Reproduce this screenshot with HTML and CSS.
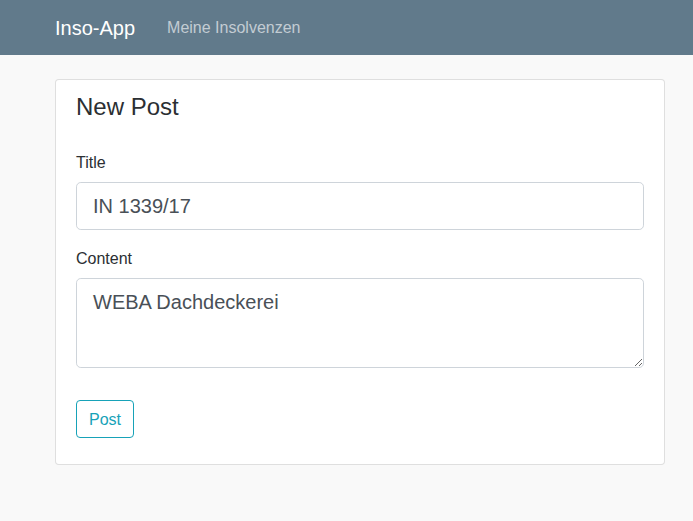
FILE: index.html
```html
<!DOCTYPE html>
<html lang="de">
<head>
<meta charset="utf-8">
<title>Inso-App</title>
<link rel="stylesheet" href="styles.css">
</head>
<body>
<nav class="navbar">
  <a class="brand" href="#">Inso-App</a>
  <a class="nav-link" href="#">Meine Insolvenzen</a>
</nav>
<main class="main">
  <div class="card">
    <h4 class="card-title">New Post</h4>
    <form class="form">
      <div class="form-group">
        <label class="label" for="title">Title</label>
        <input class="control" id="title" type="text" value="IN 1339/17">
      </div>
      <div class="form-group">
        <label class="label" for="content">Content</label>
        <textarea class="control area" id="content">WEBA Dachdeckerei</textarea>
      </div>
      <button class="btn" type="button">Post</button>
    </form>
  </div>
</main>
</body>
</html>
```
FILE: styles.css
```css
html, body {
  margin: 0;
  padding: 0;
}
body {
  background: #f9f9f9;
  font-family: "Liberation Sans", Arial, sans-serif;
  color: #212529;
  font-size: 16px;
  line-height: 1.5;
}
.navbar {
  height: 55px;
  background: #617a8b;
  display: flex;
  align-items: center;
  padding: 0 55px;
  box-sizing: border-box;
}
.brand {
  color: #fff;
  font-size: 20px;
  text-decoration: none;
  line-height: 30px;
  margin-right: 32px;
}
.nav-link {
  color: #c3ccd3;
  text-decoration: none;
  font-size: 16px;
}
.main {
  padding: 24px 28px 0 55px;
}
.card {
  width: 610px;
  box-sizing: border-box;
  background: #fff;
  border: 1px solid rgba(0,0,0,.125);
  border-radius: 4px;
  padding: 12px 20px 26px;
}
.card-title {
  margin: 0 0 29px;
  font-size: 24px;
  font-weight: 400;
  line-height: 29px;
  color: #2b2f33;
}
.form {
  margin: 0;
}
.form-group {
  margin-bottom: 16px;
}
.label {
  display: block;
  padding-top: 1px;
  margin-bottom: 7px;
  line-height: 24px;
  color: #2b2f33;
}
.control {
  display: block;
  width: 100%;
  box-sizing: border-box;
  height: 48px;
  padding: 8px 16px;
  font-family: "Liberation Sans", Arial, sans-serif;
  font-size: 20px;
  line-height: 30px;
  color: #495057;
  background: #fff;
  border: 1px solid #ced4da;
  border-radius: 4.8px;
  margin: 0;
}
.area {
  height: 90px;
  resize: vertical;
}
.btn {
  margin-top: 16px;
  font-family: "Liberation Sans", Arial, sans-serif;
  font-size: 16px;
  line-height: 24px;
  padding: 7px 12px 5px;
  color: #17a2b8;
  background: transparent;
  border: 1px solid #17a2b8;
  border-radius: 4px;
  width: 58px;
  cursor: pointer;
}
```
